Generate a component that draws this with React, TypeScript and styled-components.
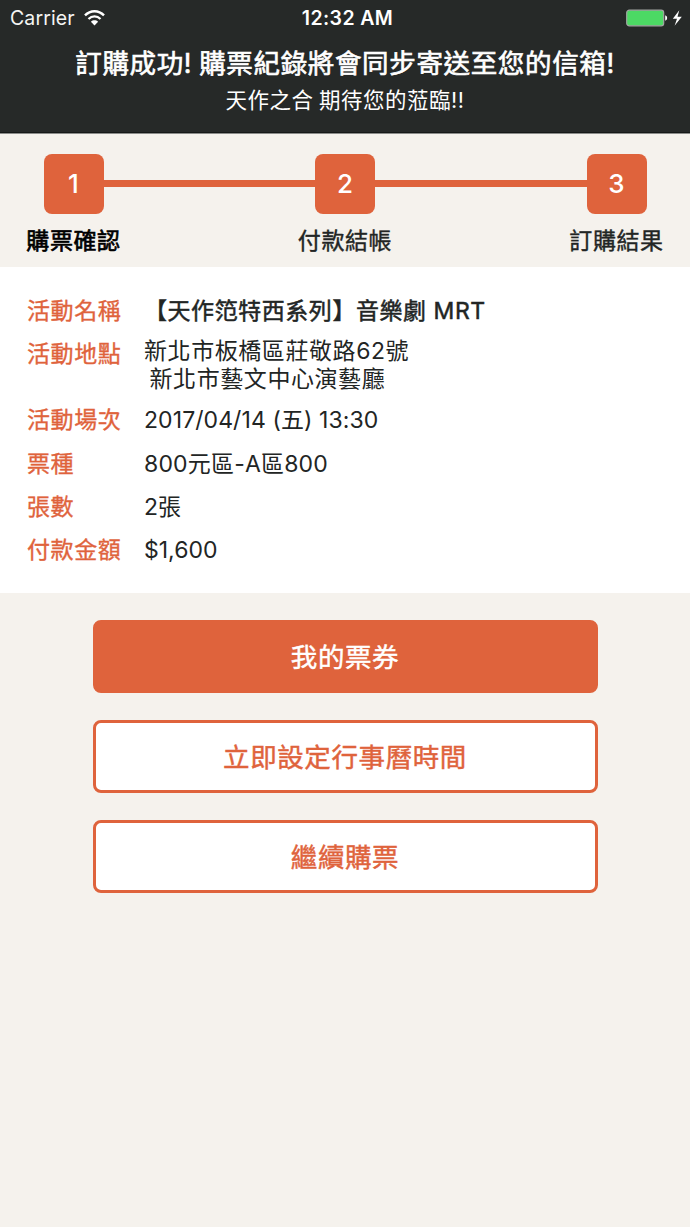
import React from "react";
import styled, { createGlobalStyle } from "styled-components";

const accent = "#df633c";
const ink = "#262928";
const paper = "#f5f2ed";

const GlobalStyle = createGlobalStyle`
  * { box-sizing: border-box; }
  body {
    margin: 0;
    background: ${paper};
    color: #222524;
    font-family: Inter, "Noto Sans CJK TC", sans-serif;
  }
`;

const Screen = styled.main`
  display: flex;
  flex-direction: column;
  width: 690px;
  height: 1227px;
  background: ${paper};
  overflow: hidden;
`;

const Header = styled.header`
  height: 134px;
  background: ${ink};
  border-bottom: 1px solid #8b8c8a;
  box-shadow: inset 0 -1px #161918;
  color: #fff;
  text-align: center;
`;

const StatusBar = styled.div`
  display: grid;
  grid-template-columns: 1fr auto 1fr;
  align-items: center;
  height: 35px;
  padding: 0 7px 0 10px;
  line-height: 35px;
`;

const Carrier = styled.div`
  display: flex;
  align-items: center;
  gap: 9px;
  padding-top: 1px;
  font-size: 19.5px;
  letter-spacing: 0.1px;
  color: #f4f5f4;

  svg {
    margin-top: -2px;
  }
`;

const Clock = styled.div`
  padding: 1px 0 0 2px;
  font-size: 19.5px;
  font-weight: 600;
  letter-spacing: 0.4px;
`;

const Power = styled.div`
  display: flex;
  justify-content: flex-end;
  align-items: center;
  margin-top: -1px;
`;

const Title = styled.h1`
  margin: 9px 0 0;
  font-size: 26.5px;
  line-height: 38px;
  font-weight: 400;
  letter-spacing: 0.65px;
  word-spacing: -1px;
  -webkit-text-stroke: 0.65px currentColor;
`;

const Subtitle = styled.p`
  margin: 2px 0 0;
  font-size: 21.5px;
  line-height: 32px;
  letter-spacing: 0.5px;
  word-spacing: -1px;
`;

const Steps = styled.ol`
  display: flex;
  align-items: flex-start;
  height: 133px;
  margin: 0;
  padding: 19.5px 13.5px 0;
  list-style: none;
`;

const StepItem = styled.li`
  display: flex;
  flex-direction: column;
  align-items: center;
  width: 120px;
`;

const StepNumber = styled.div`
  display: flex;
  align-items: center;
  justify-content: center;
  width: 60px;
  height: 60px;
  border-radius: 8px;
  background: ${accent};
  color: #fff;
  font-size: 26px;
  font-weight: 500;
`;

const StepLabel = styled.div<{ $active?: boolean }>`
  margin-top: 10px;
  color: ${(p) => (p.$active ? "#000" : "#222524")};
  font-size: 23px;
  line-height: 34px;
  letter-spacing: 0.6px;
  -webkit-text-stroke: ${(p) => (p.$active ? "0.65px" : "0.4px")} currentColor;
`;

const Connector = styled.li`
  flex: 1;
  height: 6.5px;
  margin: 26.7px -30px 0;
  background: ${accent};
`;

const Details = styled.dl`
  display: flex;
  flex-direction: column;
  height: 326px;
  margin: 0;
  padding: 23px 27px 0;
  background: #fff;
`;

const Row = styled.div<{ $tall?: boolean }>`
  display: flex;
  height: ${(p) => (p.$tall ? "66px" : "43.3px")};
  font-size: 23px;
  line-height: 43.4px;
`;

const Label = styled.dt`
  width: 117px;
  color: ${accent};
  letter-spacing: 0.6px;
  -webkit-text-stroke: 0.35px currentColor;
`;

const Value = styled.dd<{ $strong?: boolean; $tall?: boolean; $tracking: number }>`
  margin: 0;
  padding-top: ${(p) => (p.$tall ? "4px" : "0")};
  line-height: ${(p) => (p.$tall ? "28px" : "inherit")};
  white-space: pre;
  letter-spacing: ${(p) => p.$tracking}px;
  word-spacing: ${(p) => (p.$tall ? "-1.5px" : "0")};
  -webkit-text-stroke: ${(p) => (p.$strong ? "0.5px" : "0")} currentColor;
`;

const Actions = styled.nav`
  display: flex;
  flex-direction: column;
  align-items: center;
  gap: 27px;
  padding-top: 27px;
`;

const Button = styled.button<{ $filled?: boolean }>`
  width: 505px;
  height: 73px;
  padding: 0 0 3px;
  border: 3.5px solid ${accent};
  border-radius: 8px;
  background: ${(p) => (p.$filled ? accent : "#fff")};
  color: ${(p) => (p.$filled ? "#fff" : accent)};
  font: inherit;
  font-size: 26.5px;
  letter-spacing: 0.6px;
  -webkit-text-stroke: 0.45px currentColor;
`;

const WifiIcon = () => (
  <svg width="21" height="16" viewBox="0 0 21 16" fill="none">
    <path d="M1 5.4C6.4 -.2 14.6 -.2 20 5.4" stroke="#fff" strokeWidth="2.4" />
    <path d="M4.5 9C8 5.5 13 5.5 16.5 9" stroke="#fff" strokeWidth="2.3" />
    <path d="M10.5 15.4 6.9 11.7C9 9.8 12 9.8 14.1 11.7Z" fill="#fff" />
  </svg>
);

const BatteryIcon = () => (
  <svg width="57" height="18" viewBox="0 0 57 18">
    <rect x=".7" y="1.2" width="37" height="15.6" rx="2.6" fill="#4cd964" stroke="#a1a5a2" strokeWidth="1.2" />
    <path d="M39.2 6.3Q41.2 7 41.2 9T39.2 11.7Z" fill="#fff" />
    <path d="M53.3 1.2 46.8 9.8H51L48.6 16.8 55.8 7.8H51.5Z" fill="#fff" />
  </svg>
);

const details = [
  { label: "活動名稱", value: "【天作笵特西系列】音樂劇 MRT", tracking: 0.55, strong: true },
  { label: "活動地點", value: "新北市板橋區莊敬路62號\n 新北市藝文中心演藝廳", tracking: 0.57, tall: true },
  { label: "活動場次", value: "2017/04/14 (五) 13:30", tracking: 0.08 },
  { label: "票種", value: "800元區-A區800", tracking: 0.18 },
  { label: "張數", value: "2張", tracking: 0 },
  { label: "付款金額", value: "$1,600", tracking: 0 },
];

export default function App() {
  return (
    <>
      <GlobalStyle />
      <Screen lang="zh-Hant">
        <Header>
          <StatusBar>
            <Carrier>Carrier<WifiIcon /></Carrier>
            <Clock>12:32 AM</Clock>
            <Power><BatteryIcon /></Power>
          </StatusBar>
          <Title>訂購成功! 購票紀錄將會同步寄送至您的信箱!</Title>
          <Subtitle>天作之合 期待您的蒞臨!!</Subtitle>
        </Header>
        <Steps>
          <StepItem><StepNumber>1</StepNumber><StepLabel $active>購票確認</StepLabel></StepItem>
          <Connector aria-hidden="true" />
          <StepItem><StepNumber>2</StepNumber><StepLabel>付款結帳</StepLabel></StepItem>
          <Connector aria-hidden="true" />
          <StepItem><StepNumber>3</StepNumber><StepLabel>訂購結果</StepLabel></StepItem>
        </Steps>
        <Details>
          {details.map((d) => (
            <Row key={d.label} $tall={d.tall}>
              <Label>{d.label}</Label>
              <Value $strong={d.strong} $tall={d.tall} $tracking={d.tracking}>{d.value}</Value>
            </Row>
          ))}
        </Details>
        <Actions>
          <Button $filled>我的票券</Button>
          <Button>立即設定行事曆時間</Button>
          <Button>繼續購票</Button>
        </Actions>
      </Screen>
    </>
  );
}
